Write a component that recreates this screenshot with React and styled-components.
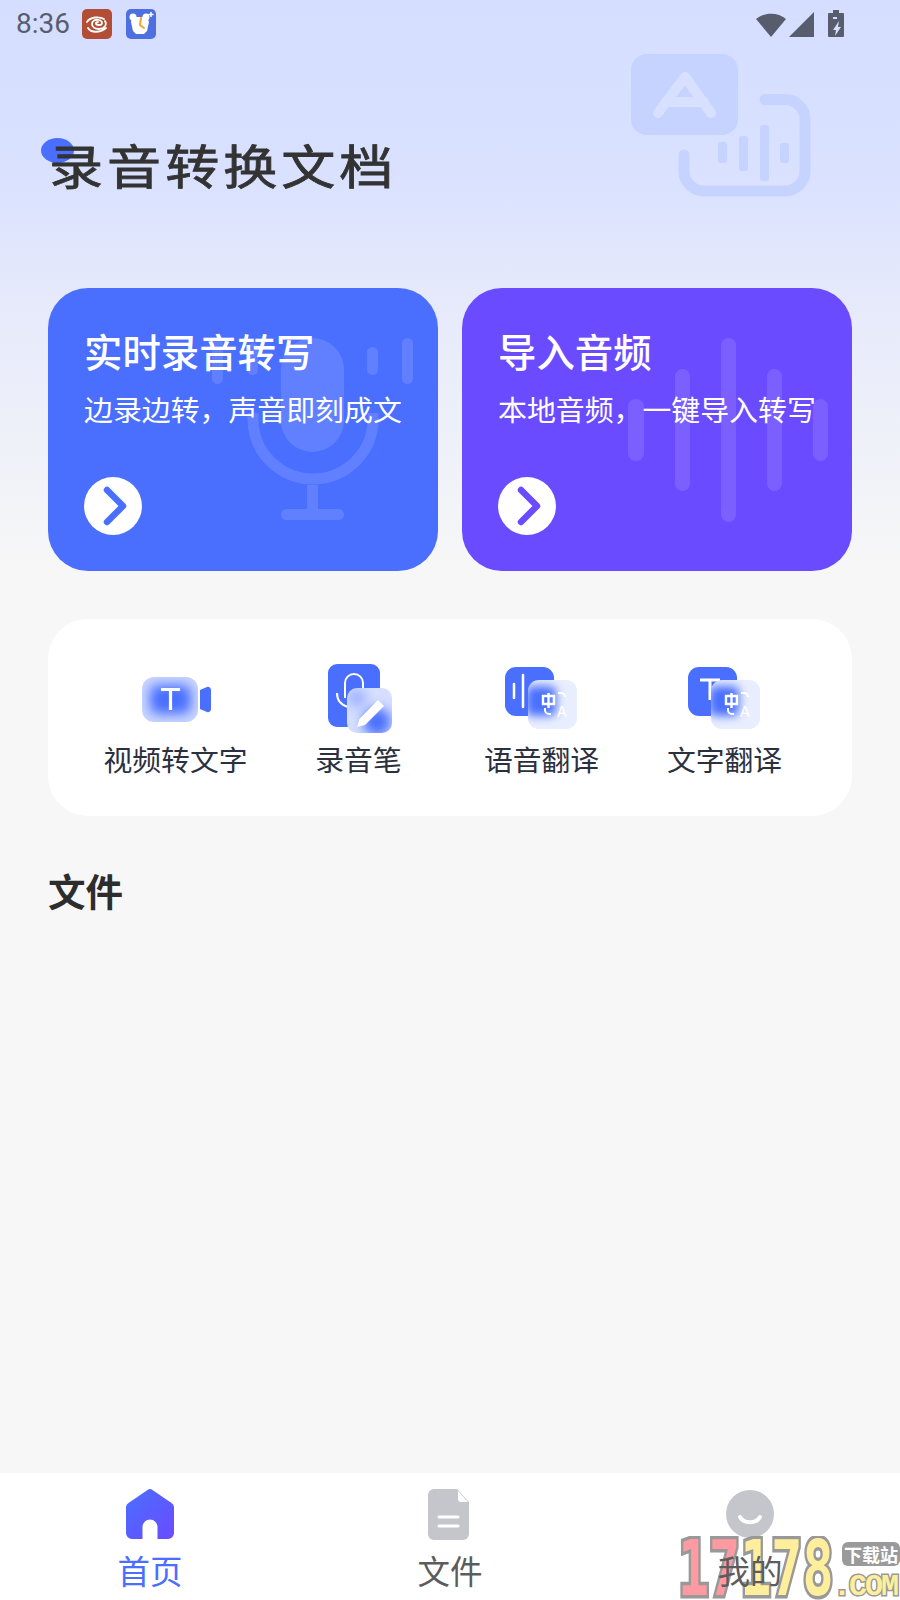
import React from "react";
import styled, { createGlobalStyle } from "styled-components";

const CJK = `"Noto Sans CJK SC", "Noto Sans", sans-serif`;
const BLUE = "#4a6fff";
const PURPLE = "#6a4bff";

const GlobalStyle = createGlobalStyle`
    html, body {
        margin: 0;
        padding: 0;
        background: #f7f7f7;
        font-family: ${CJK};
    }
`;

const Page = styled.div`
    position: relative;
    width: 900px;
    height: 1600px;
    overflow: hidden;
    display: flex;
    flex-direction: column;
    background: linear-gradient(180deg, #d5deff 0, #d9e1ff 170px, #e5e9fb 288px, #f7f7f7 570px);
`;

const StatusBar = styled.div`
    height: 48px;
    display: flex;
    align-items: center;
    padding: 0 56px 0 16px;
    color: #585d6e;
`;

const Time = styled.span`
    font: 28px/50px Roboto, sans-serif;
    width: 66px;
`;

const NoticeIcon = styled.svg`
    width: 30px;
    height: 30px;
    margin-right: 14px;
`;

const StatusIcons = styled.svg`
    width: 88px;
    height: 30px;
    margin-left: auto;
`;

const BackArt = styled.svg`
    position: absolute;
    left: 620px;
    top: 44px;
    width: 200px;
    height: 160px;
`;

const TitleWrap = styled.div`
    position: relative;
    margin: 90px 0 94px 52px;
    height: 56px;
`;

const TitleDot = styled.div`
    position: absolute;
    left: -11px;
    top: 0;
    width: 33px;
    height: 25px;
    border-radius: 50%;
    background: ${BLUE};
`;

const Title = styled.h1`
    position: relative;
    top: -2px;
    margin: 0 0 0 -3px;
    font-size: 47px;
    line-height: 56px;
    font-weight: 400;
    letter-spacing: 3.5px;
    color: #333;
    -webkit-text-stroke: 0.8px #333;
    transform: scaleX(1.15);
    transform-origin: left center;
`;

const CardRow = styled.div`
    display: grid;
    grid-template-columns: 390px 390px;
    gap: 24px;
    padding: 0 48px;
`;

const Card = styled.div`
    position: relative;
    height: 283px;
    box-sizing: border-box;
    padding: 37px 0 36px 36px;
    display: flex;
    flex-direction: column;
    overflow: hidden;
    border-radius: 40px;
    color: #fff;
    background: ${p => p.$color};
`;

const CardArt = styled.svg`
    position: absolute;
    left: 0;
    top: 0;
    width: 390px;
    height: 283px;
`;

const CardTitle = styled.div`
    position: relative;
    font-size: 38.4px;
    line-height: 50px;
    font-weight: 500;
`;

const CardSub = styled.div`
    position: relative;
    margin-top: 13px;
    font-size: 28.9px;
    line-height: 40px;
    white-space: nowrap;
`;

const ArrowButton = styled.div`
    position: relative;
    margin-top: auto;
    width: 58px;
    height: 58px;
    border-radius: 50%;
    background: #fff;
    color: ${p => p.$color};
    svg {
        display: block;
    }
`;

const ToolPanel = styled.div`
    margin: 48px 48px 0;
    padding: 41px 36px 34px;
    display: grid;
    grid-template-columns: repeat(4, 183px);
    background: #fff;
    border-radius: 40px;
`;

const Tool = styled.div`
    display: flex;
    flex-direction: column;
    align-items: center;
`;

const ToolLabel = styled.div`
    font-size: 28.8px;
    line-height: 46px;
    color: #2b303e;
    white-space: nowrap;
`;

const ToolIconSvg = styled.svg`
    display: block;
    width: 80px;
    height: 76px;
`;

const SectionTitle = styled.h2`
    margin: 47px 0 0 48px;
    font-size: 37.5px;
    line-height: 54px;
    font-weight: 700;
    color: #2d2d2d;
`;

const TabBar = styled.div`
    margin-top: auto;
    height: 127px;
    display: grid;
    grid-template-columns: repeat(3, 1fr);
    background: #fff;
`;

const Tab = styled.div`
    display: flex;
    flex-direction: column;
    align-items: center;
    padding-top: 16px;
`;

const TabIcon = styled.svg`
    display: block;
    width: 52px;
    height: 52px;
`;

const TabLabel = styled.div`
    position: relative;
    z-index: 2;
    margin-top: 6px;
    font-size: 32.5px;
    line-height: 46px;
    color: ${p => (p.$active ? BLUE : "#5c5c5c")};
`;

const Watermark = styled.div`
    position: absolute;
    left: 677px;
    top: 1536px;
    width: 223px;
    height: 64px;
    overflow: hidden;
    z-index: 1;
`;

const WatermarkDigits = styled.span`
    position: absolute;
    left: 1px;
    top: -8px;
    font: bold 76px/82px "DejaVu Sans Mono", monospace;
    color: #ffef9c;
    -webkit-text-stroke: 7px #999;
    paint-order: stroke fill;
    transform: scaleX(0.68);
    transform-origin: left top;
    b {
        color: #ff9aa3;
    }
`;

const WatermarkBadge = styled.span`
    position: absolute;
    left: 165px;
    top: 6px;
    width: 58px;
    height: 24px;
    border-radius: 6px;
    background: #9a9a9a;
    color: #fff;
    font-size: 18px;
    font-weight: 700;
    line-height: 24px;
    text-align: center;
    white-space: nowrap;
`;

const WatermarkCom = styled.span`
    position: absolute;
    left: 156px;
    top: 36px;
    font: bold 30px/30px "Liberation Mono", monospace;
    letter-spacing: -2px;
    color: #ffef9c;
    -webkit-text-stroke: 3px #999;
    paint-order: stroke fill;
`;

const Chevron = () => (
    <svg width="58" height="58" viewBox="0 0 58 58">
        <path d="M23 13l16 16-16 16" fill="none" stroke="currentColor" strokeWidth="6.5" strokeLinecap="round" strokeLinejoin="round" />
    </svg>
);

const MicArt = () => (
    <CardArt viewBox="0 0 390 283" fill="#fff" opacity="0.12">
        <rect x="233" y="50" width="63" height="114" rx="31.5" />
        <path d="M205 125v6a60 60 0 0 0 120 0v-6" fill="none" stroke="#fff" strokeWidth="11" />
        <rect x="259" y="197" width="11" height="28" />
        <rect x="233" y="221" width="63" height="11" rx="5.5" />
        <rect x="164" y="50" width="11" height="46" rx="5.5" />
        <rect x="199" y="55" width="11" height="32" rx="5.5" />
        <rect x="319" y="59" width="11" height="28" rx="5.5" />
        <rect x="354" y="50" width="11" height="46" rx="5.5" />
    </CardArt>
);

const WaveArt = () => (
    <CardArt viewBox="0 0 390 283" fill="#fff" opacity="0.12">
        <rect x="166" y="111" width="16" height="62" rx="8" />
        <rect x="213" y="81" width="15" height="122" rx="7.5" />
        <rect x="259" y="50" width="15" height="184" rx="7.5" />
        <rect x="305" y="81" width="15" height="122" rx="7.5" />
        <rect x="351" y="111" width="15" height="62" rx="7.5" />
    </CardArt>
);

const HeaderArt = () => (
    <BackArt viewBox="620 44 200 160" fill="none">
        <rect x="631" y="54" width="107" height="81" rx="16" fill="#c6d3ff" />
        <path d="M658 113l27-36 26 36M666 102h38" stroke="#d8e0ff" strokeWidth="10" strokeLinecap="round" strokeLinejoin="round" />
        <path d="M765 99.5h20a20 20 0 0 1 20 20V171a20 20 0 0 1-20 20h-81a20 20 0 0 1-20-20v-16" stroke="#c6d3ff" strokeWidth="11" strokeLinecap="round" />
        <g fill="#c6d3ff">
            <rect x="718" y="142" width="9" height="21" rx="3" />
            <rect x="739" y="136" width="9" height="35" rx="3" />
            <rect x="760" y="125" width="9" height="56" rx="3" />
            <rect x="780" y="143" width="9" height="20" rx="3" />
        </g>
    </BackArt>
);

const VideoIcon = () => (
    <ToolIconSvg viewBox="0 0 80 76">
        <defs>
            <filter id="videoBlur" x="-40%" y="-40%" width="180%" height="180%">
                <feGaussianBlur stdDeviation="6" />
            </filter>
            <clipPath id="videoClip">
                <rect x="6" y="17" width="56" height="45" rx="12" />
            </clipPath>
        </defs>
        <path d="M64 30l7-3a3 3 0 0 1 4 3v19a3 3 0 0 1-4 3l-7-3z" fill={BLUE} />
        <rect x="6" y="17" width="56" height="45" rx="12" fill="#cbd6ff" />
        <g clipPath="url(#videoClip)">
            <rect x="14" y="25" width="41" height="29" rx="8" fill={BLUE} filter="url(#videoBlur)" />
        </g>
        <path d="M25 29.500h19M34.500 29.500V50" stroke="#fff" strokeWidth="3.2" fill="none" />
    </ToolIconSvg>
);

const RecorderIcon = () => (
    <ToolIconSvg viewBox="0 0 80 76">
        <defs>
            <filter id="penBlur" x="-50%" y="-50%" width="200%" height="200%">
                <feGaussianBlur stdDeviation="6" />
            </filter>
            <clipPath id="penClip">
                <rect x="28" y="28" width="45" height="45" rx="10" />
            </clipPath>
        </defs>
        <rect x="9" y="4" width="52" height="63" rx="9" fill={BLUE} />
        <path d="M26 38V23a9 9 0 0 1 18 0v8M18 33c0 7 4 12 11 14" fill="none" stroke="#fff" strokeWidth="2" />
        <rect x="28" y="28" width="45" height="45" rx="10" fill="#d6dfff" />
        <g clipPath="url(#penClip)">
            <circle cx="58" cy="62" r="14" fill={BLUE} filter="url(#penBlur)" />
            <circle cx="38" cy="38" r="9" fill="#8aa0ff" opacity="0.8" filter="url(#penBlur)" />
        </g>
        <path d="M38 67l2.500-8L59 40l6 6-19 19z" fill="#fff" />
    </ToolIconSvg>
);

const TranslateIcon = ({ id, children }) => (
    <ToolIconSvg viewBox="0 0 80 76">
        <defs>
            <filter id={`${id}Blur`} x="-50%" y="-50%" width="200%" height="200%">
                <feGaussianBlur stdDeviation="5" />
            </filter>
            <clipPath id={`${id}Clip`}>
                <rect x="26" y="20" width="49" height="49" rx="11" />
            </clipPath>
        </defs>
        <rect x="3" y="7" width="49" height="49" rx="11" fill={BLUE} />
        {children}
        <rect x="26" y="20" width="49" height="49" rx="11" fill="#e9eeff" />
        <g clipPath={`url(#${id}Clip)`}>
            <rect x="24" y="26" width="30" height="30" rx="6" fill={BLUE} filter={`url(#${id}Blur)`} />
        </g>
        <path d="M41 36h11v8H41zM46.500 33v15" fill="none" stroke="#fff" strokeWidth="2.400" />
        <path d="M56 33h3a4 4 0 0 1 4 4M43 48v2a4 4 0 0 0 4 4h2" fill="none" stroke="#fff" strokeWidth="2" />
        <text x="60" y="57" textAnchor="middle" fontFamily="Inter, sans-serif" fontSize="15" fill="#fff">A</text>
    </ToolIconSvg>
);

const tools = [
    { label: "视频转文字", icon: <VideoIcon /> },
    { label: "录音笔", icon: <RecorderIcon /> },
    {
        label: "语音翻译",
        icon: (
            <TranslateIcon id="voice">
                <path d="M12 24v14M21 15v32" stroke="#fff" strokeWidth="2.500" strokeLinecap="round" />
            </TranslateIcon>
        )
    },
    {
        label: "文字翻译",
        icon: (
            <TranslateIcon id="text">
                <path d="M15 20h20M25 20v20" stroke="#fff" strokeWidth="3" />
            </TranslateIcon>
        )
    }
];

export default function App() {
    return (
        <Page>
            <GlobalStyle />
            <HeaderArt />

            <StatusBar>
                <Time>8:36</Time>
                <NoticeIcon viewBox="0 0 30 30">
                    <rect width="30" height="30" rx="5" fill="#b24e36" />
                    <path d="M5 13c3-5 12-6 17-3M6 19c3 5 12 5 18 0M23 12c2 3 0 8-6 8-4 0-7-2-7-5s3-5 7-4 4 5 0 5-4-3-1-3" fill="none" stroke="#fff" strokeWidth="1.800" strokeLinecap="round" />
                </NoticeIcon>
                <NoticeIcon viewBox="0 0 30 30">
                    <rect width="30" height="30" rx="5" fill="#4d6fe0" />
                    <circle cx="7" cy="8" r="3.500" fill="#fff" />
                    <circle cx="20" cy="8" r="3.500" fill="#fff" />
                    <path d="M6 8h15l2 5-2 9-3 3H10l-3-3-2-9z" fill="#fff" />
                    <path d="M15 9l-1 7 4 3" fill="none" stroke="#f0a92c" strokeWidth="2" strokeLinecap="round" />
                    <path d="M25 3v5M22.500 5.500h5" stroke="#fff" strokeWidth="1.500" />
                </NoticeIcon>
                <StatusIcons viewBox="0 0 88 30" fill="#585d6e">
                    <path d="M0 10c8-7 22-7 30 0L15 28z" />
                    <path d="M58 3v25H33z" />
                    <path fillRule="evenodd" d="M73 4h4V1h6v3h4a1 1 0 0 1 1 1v22a1 1 0 0 1-1 1H73a1 1 0 0 1-1-1V5a1 1 0 0 1 1-1zm4 4v2h4V8zm6 4l-6 9h3l-1 6 6-9h-3l1-6z" />
                </StatusIcons>
            </StatusBar>

            <TitleWrap>
                <TitleDot />
                <Title>录音转换文档</Title>
            </TitleWrap>

            <CardRow>
                <Card $color={BLUE}>
                    <MicArt />
                    <CardTitle>实时录音转写</CardTitle>
                    <CardSub>边录边转，声音即刻成文</CardSub>
                    <ArrowButton $color={BLUE}>
                        <Chevron />
                    </ArrowButton>
                </Card>
                <Card $color={PURPLE}>
                    <WaveArt />
                    <CardTitle>导入音频</CardTitle>
                    <CardSub>本地音频，一键导入转写</CardSub>
                    <ArrowButton $color={PURPLE}>
                        <Chevron />
                    </ArrowButton>
                </Card>
            </CardRow>

            <ToolPanel>
                {tools.map(tool => (
                    <Tool key={tool.label}>
                        {tool.icon}
                        <ToolLabel>{tool.label}</ToolLabel>
                    </Tool>
                ))}
            </ToolPanel>

            <SectionTitle>文件</SectionTitle>

            <TabBar>
                <Tab>
                    <TabIcon viewBox="0 0 52 52">
                        <defs>
                            <linearGradient id="homeFill" x1="0" y1="0" x2="1" y2="1">
                                <stop offset="0" stopColor={BLUE} />
                                <stop offset="1" stopColor={PURPLE} />
                            </linearGradient>
                        </defs>
                        <path
                            fillRule="evenodd"
                            d="M23.500 1a4 4 0 0 1 5 0L47.500 14a5 5 0 0 1 2.500 4V44a6 6 0 0 1-6 6H33.500V38a7.500 7.500 0 0 0-15 0v12H8a6 6 0 0 1-6-6V18a5 5 0 0 1 2.500-4z"
                            fill="url(#homeFill)"
                        />
                    </TabIcon>
                    <TabLabel $active>首页</TabLabel>
                </Tab>
                <Tab>
                    <TabIcon viewBox="0 0 52 52">
                        <path d="M10 0h23l12 13v32a6 6 0 0 1-6 6H10a6 6 0 0 1-6-6V6a6 6 0 0 1 6-6z" fill="#c5c6cb" />
                        <path d="M34 2l10 11h-7a3 3 0 0 1-3-3z" fill="#fff" />
                        <path d="M15 28h19M15 37h19" stroke="#fff" strokeWidth="3" strokeLinecap="round" />
                    </TabIcon>
                    <TabLabel>文件</TabLabel>
                </Tab>
                <Tab>
                    <TabIcon viewBox="0 0 52 52">
                        <circle cx="26" cy="25" r="24" fill="#c5c6cb" />
                        <path d="M16 28c4 7 16 7 20 0" fill="none" stroke="#fff" strokeWidth="4" strokeLinecap="round" />
                    </TabIcon>
                    <TabLabel>我的</TabLabel>
                </Tab>
            </TabBar>

            <Watermark>
                <WatermarkDigits>
                    <b>17</b>178
                </WatermarkDigits>
                <WatermarkBadge>下载站</WatermarkBadge>
                <WatermarkCom>.COM</WatermarkCom>
            </Watermark>
        </Page>
    );
}
